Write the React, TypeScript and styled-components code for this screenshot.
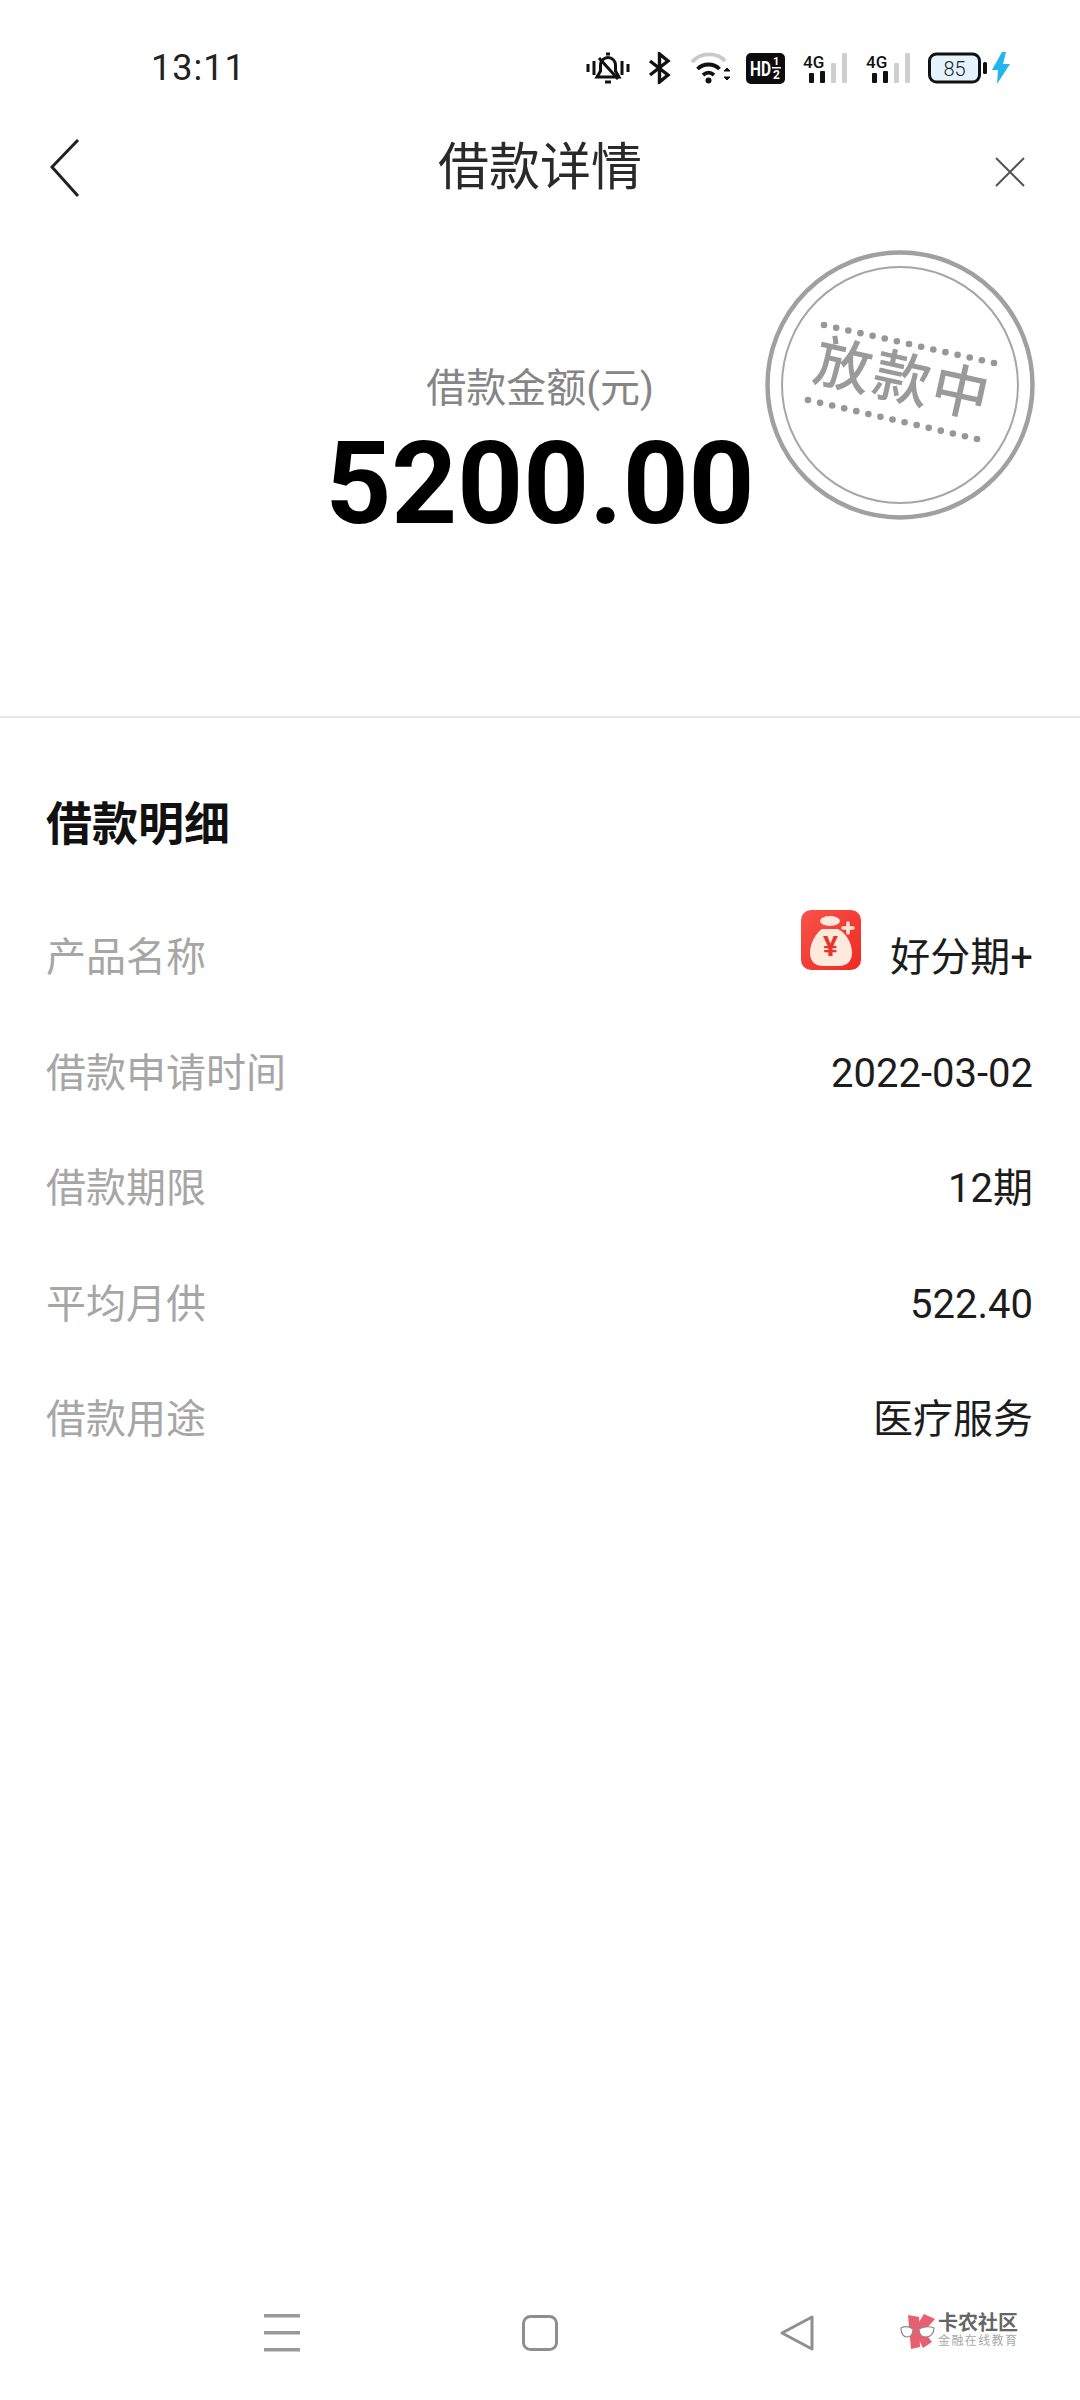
import React from 'react';
import styled, { createGlobalStyle } from 'styled-components';

const FONT = `Roboto, "Noto Sans CJK SC", sans-serif`;

const GlobalStyle = createGlobalStyle`
  html, body {
    margin: 0;
    padding: 0;
    background: #fff;
  }
  body {
    font-family: ${FONT};
  }
`;

const Page = styled.div`
  position: relative;
  box-sizing: border-box;
  width: 1080px;
  height: 2400px;
  display: flex;
  flex-direction: column;
  background: #fff;
  overflow: hidden;
`;

const StatusBar = styled.div`
  box-sizing: border-box;
  height: 100px;
  padding: 36px 70px 0 151px;
  display: flex;
  align-items: center;
  justify-content: space-between;
`;

const Clock = styled.span`
  font-size: 36px;
  letter-spacing: 1px;
  color: #222;
`;

const StatusIcons = styled.div`
  display: flex;
  align-items: center;
`;

const Glyph = styled.svg<{ $gap?: number; $drop?: number }>`
  display: block;
  margin-left: ${(p) => p.$gap ?? 0}px;
  margin-top: ${(p) => p.$drop ?? 0}px;
`;

const Header = styled.div`
  box-sizing: border-box;
  height: 130px;
  padding: 6px 55px 0 50px;
  display: flex;
  align-items: center;
  justify-content: space-between;
`;

const Title = styled.h1`
  margin: 0;
  font-size: 51px;
  font-weight: 400;
  line-height: 60px;
  color: #2a2a2a;
`;

const Hero = styled.section`
  position: relative;
  box-sizing: border-box;
  height: 488px;
  padding-top: 135px;
  display: flex;
  flex-direction: column;
  align-items: center;
  border-bottom: 2px solid #e6e6e6;
`;

const AmountLabel = styled.div`
  font-size: 40px;
  line-height: 48px;
  color: #858585;
`;

const Amount = styled.div`
  margin-top: 12px;
  font-size: 115px;
  font-weight: 700;
  line-height: 118px;
  color: #000;
`;

const Stamp = styled.svg`
  position: absolute;
  top: 15px;
  right: 40px;
`;

const Details = styled.section`
  padding: 76px 47px 0 46px;
`;

const SectionTitle = styled.h2`
  margin: 0 0 46.5px;
  font-size: 46px;
  font-weight: 700;
  line-height: 60px;
  color: #111;
`;

const Row = styled.div`
  height: 115.5px;
  display: flex;
  align-items: center;
  justify-content: space-between;
`;

const RowLabel = styled.span`
  font-size: 40px;
  line-height: 48px;
  color: #a6a6a6;
`;

const RowValue = styled.span`
  display: flex;
  align-items: center;
  font-size: 40px;
  line-height: 48px;
  color: #1c1c1c;
`;

const ProductIcon = styled.svg`
  display: block;
  margin: 0 29px 36px 0;
`;

const NavBar = styled.nav`
  box-sizing: border-box;
  height: 134px;
  margin-top: auto;
  padding: 0 266px 0 264px;
  display: flex;
  align-items: center;
  justify-content: space-between;
`;

const Watermark = styled.div`
  position: absolute;
  left: 900px;
  bottom: 50px;
  display: flex;
  align-items: center;
  gap: 3px;
`;

const WatermarkText = styled.div`
  display: flex;
  flex-direction: column;
  align-items: flex-start;
`;

const WatermarkName = styled.span`
  font-size: 20px;
  font-weight: 700;
  line-height: 20px;
  color: #666;
`;

const WatermarkSub = styled.span`
  font-size: 12px;
  line-height: 17px;
  letter-spacing: 1.4px;
  color: #a8a8a8;
`;

const BellIcon = () => (
  <Glyph width="44" height="32" viewBox="0 0 44 32" fill="none" stroke="#111" strokeWidth="3">
    <path d="M2 12v8M8 9v14M36 9v14M42 12v8" />
    <path d="M11 25h22l-3.500-6v-6a7.500 7.500 0 0 0-15 0v6z" />
    <path d="M13 6l19 21" />
    <path d="M19 30h6M20 2h4" />
  </Glyph>
);

const BluetoothIcon = () => (
  <Glyph $gap={18} width="23" height="32" viewBox="0 0 23 32" fill="none" stroke="#111" strokeWidth="3.400">
    <path d="M2 9l18 14-8.500 7V2L20 9 2 23" />
  </Glyph>
);

const WifiIcon = () => (
  <Glyph $gap={20} width="40" height="32" viewBox="0 0 40 32" fill="none" strokeWidth="3.800">
    <path d="M1 10C10 0 26 0 34 9" stroke="#c9c9c9" />
    <path d="M6.500 17c6-6 16-6 22 0" stroke="#111" />
    <path d="M12 23c3.500-3 7.500-3 11 0" stroke="#111" />
    <circle cx="17.500" cy="28.500" r="3" fill="#111" stroke="none" />
    <path d="M33 19l3-3 3 3zM33 25l3 3 3-3z" fill="#111" strokeWidth="1" stroke="#111" />
  </Glyph>
);

const HdIcon = () => (
  <Glyph $gap={15} width="39" height="31" viewBox="0 0 39 31">
    <rect width="39" height="31" rx="5" fill="#0c0c0c" />
    <text x="4" y="23" fontFamily={FONT} fontSize="21" fontWeight="700" fill="#fff" textLength="21" lengthAdjust="spacingAndGlyphs">HD</text>
    <text x="27" y="12" fontFamily={FONT} fontSize="11" fontWeight="700" fill="#fff">1</text>
    <rect x="26" y="14" width="9" height="1.500" fill="#fff" />
    <text x="27" y="26" fontFamily={FONT} fontSize="12" fontWeight="700" fill="#fff">2</text>
  </Glyph>
);

const SignalIcon = ({ gap }: { gap: number }) => (
  <Glyph $gap={gap} width="44" height="32" viewBox="0 0 44 32">
    <text x="0" y="16" fontFamily={FONT} fontSize="17" fontWeight="500" fill="#111">4G</text>
    <rect x="6" y="21" width="5" height="10" rx="1" fill="#111" />
    <rect x="17" y="19" width="5" height="12" rx="1" fill="#111" />
    <rect x="28" y="11" width="5" height="20" rx="1" fill="#cfcfcf" />
    <rect x="39" y="1" width="5" height="30" rx="1" fill="#cfcfcf" />
  </Glyph>
);

const BatteryIcon = () => (
  <Glyph $gap={18} width="59" height="32" viewBox="0 0 59 32">
    <rect x="1.500" y="2" width="50" height="28" rx="7" fill="#e4f3fd" stroke="#111" strokeWidth="3" />
    <rect x="55" y="10" width="4" height="12" rx="1.500" fill="#111" />
    <text x="26.500" y="24" textAnchor="middle" fontFamily={FONT} fontSize="20" fontWeight="300" fill="#222">85</text>
  </Glyph>
);

const BoltIcon = () => (
  <Glyph $gap={5} width="18" height="32" viewBox="0 0 18 32">
    <path d="M10 0L0 18h6l-1 14L18 12h-7l3-12z" fill="#22b5ee" />
  </Glyph>
);

const StampMark = () => {
  const dots = (x0: number, y0: number, x1: number, y1: number) =>
    Array.from({ length: 15 }, (_, i) => (
      <circle key={i} cx={x0 + ((x1 - x0) * i) / 14} cy={y0 + ((y1 - y0) * i) / 14} r="3.300" fill="#979797" />
    ));
  return (
    <Stamp width="280" height="280" viewBox="0 0 280 280" fill="none">
      <circle cx="140" cy="140" r="132.500" stroke="#a0a0a0" strokeWidth="4.500" />
      <circle cx="140" cy="140" r="118" stroke="#a6a6a6" strokeWidth="2" />
      {dots(64, 80, 234, 118)}
      {dots(48, 155, 217, 194)}
      <text
        x="143"
        y="135"
        textAnchor="middle"
        dominantBaseline="central"
        transform="rotate(12.500 143 135)"
        fontFamily={FONT}
        fontSize="57"
        fontWeight="500"
        letterSpacing="3"
        fill="#9a9a9a"
      >
        放款中
      </text>
    </Stamp>
  );
};

const BagIcon = () => (
  <ProductIcon width="60" height="60" viewBox="0 0 60 60">
    <defs>
      <linearGradient id="bagBg" x1="0" y1="0" x2="1" y2="1">
        <stop offset="0" stopColor="#f8534a" />
        <stop offset="1" stopColor="#ee2a22" />
      </linearGradient>
    </defs>
    <rect width="60" height="60" rx="10" fill="url(#bagBg)" />
    <ellipse cx="29" cy="11" rx="10" ry="5" fill="#fde9dc" />
    <path d="M21 19h16c8 4 14 14 14 24 0 9-6 13-13 13H22c-7 0-13-4-13-13 0-10 6-20 12-24z" fill="#fdeadc" />
    <text x="29.500" y="46" textAnchor="middle" fontFamily={FONT} fontSize="28" fontWeight="700" fill="#e8352b">¥</text>
    <path d="M47 13v10M42 18h10" stroke="#fde9dc" strokeWidth="3.500" strokeLinecap="round" />
  </ProductIcon>
);

const details: { label: string; value: string }[] = [
  { label: '借款申请时间', value: '2022-03-02' },
  { label: '借款期限', value: '12期' },
  { label: '平均月供', value: '522.40' },
  { label: '借款用途', value: '医疗服务' },
];

const App = () => {
  return (
    <Page>
      <GlobalStyle />
      <StatusBar>
        <Clock>13:11</Clock>
        <StatusIcons>
          <BellIcon />
          <BluetoothIcon />
          <WifiIcon />
          <HdIcon />
          <SignalIcon gap={18} />
          <SignalIcon gap={19} />
          <BatteryIcon />
          <BoltIcon />
        </StatusIcons>
      </StatusBar>

      <Header>
        <Glyph width="35" height="60" viewBox="0 0 35 60" fill="none" stroke="#222" strokeWidth="3">
          <path d="M28 2L2 29l26 29" />
        </Glyph>
        <Title>借款详情</Title>
        <Glyph $drop={8} width="30" height="30" viewBox="0 0 30 30" fill="none" stroke="#555" strokeWidth="2">
          <path d="M1 1l28 28M29 1L1 29" />
        </Glyph>
      </Header>

      <Hero>
        <AmountLabel>借款金额(元)</AmountLabel>
        <Amount>5200.00</Amount>
        <StampMark />
      </Hero>

      <Details>
        <SectionTitle>借款明细</SectionTitle>
        <Row>
          <RowLabel>产品名称</RowLabel>
          <RowValue>
            <BagIcon />
            好分期+
          </RowValue>
        </Row>
        {details.map((item) => (
          <Row key={item.label}>
            <RowLabel>{item.label}</RowLabel>
            <RowValue>{item.value}</RowValue>
          </Row>
        ))}
      </Details>

      <NavBar>
        <Glyph width="36" height="38" viewBox="0 0 36 38" fill="#999">
          <rect y="0" width="36" height="3.500" />
          <rect y="17" width="36" height="3.500" />
          <rect y="34" width="36" height="3.500" />
        </Glyph>
        <Glyph width="36" height="36" viewBox="0 0 36 36" fill="none" stroke="#8f8f8f" strokeWidth="3">
          <rect x="1.500" y="1.500" width="33" height="33" rx="7" />
        </Glyph>
        <Glyph width="34" height="36" viewBox="0 0 34 36" fill="none" stroke="#8f8f8f" strokeWidth="3" strokeLinejoin="round">
          <path d="M32 2v32L2 18z" />
        </Glyph>
      </NavBar>

      <Watermark>
        <Glyph width="35" height="36" viewBox="0 0 35 36">
          <path d="M8 1l11 2 1 30-9 2z" fill="#e8606f" />
          <path d="M24 0l11 5-15 17-5-8z" fill="#e8606f" />
          <path d="M15 18l7-3 10 13-9 6z" fill="#e8606f" />
          <path d="M1 14c4-2 9-1 12 1 0 5-2 8-6 8s-6-4-6-9z" fill="#fff" stroke="#888" strokeWidth="1.200" />
          <path d="M19 15c4-2 10-3 15-1 0 5-3 9-8 9s-7-4-7-8z" fill="#fff" stroke="#888" strokeWidth="1.200" />
        </Glyph>
        <WatermarkText>
          <WatermarkName>卡农社区</WatermarkName>
          <WatermarkSub>金融在线教育</WatermarkSub>
        </WatermarkText>
      </Watermark>
    </Page>
  );
};

export default App;
